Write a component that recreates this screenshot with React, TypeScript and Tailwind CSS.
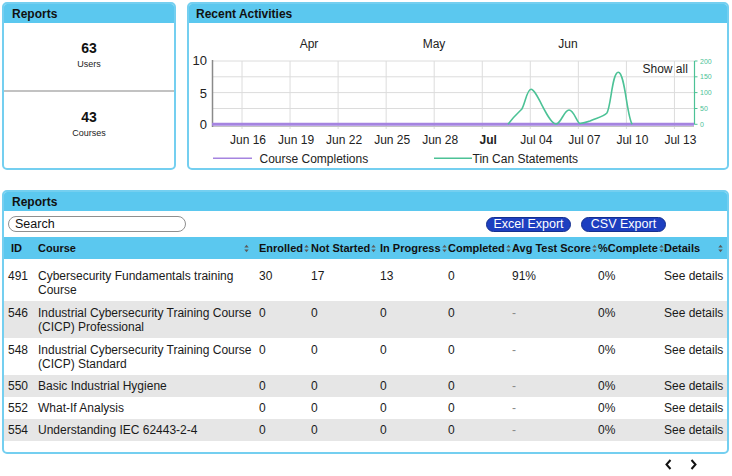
import { Fragment } from 'react'

const rows = [
  { id: 491, course: 'Cybersecurity Fundamentals training Course', enrolled: 30, notStarted: 17, inProgress: 13, completed: 0, avg: '91%', pct: '0%', pad: 'pt-[10px] pb-[4px]' },
  { id: 546, course: 'Industrial Cybersecurity Training Course (CICP) Professional', enrolled: 0, notStarted: 0, inProgress: 0, completed: 0, avg: '-', pct: '0%', pad: 'pt-[5px] pb-[4px]' },
  { id: 548, course: 'Industrial Cybersecurity Training Course (CICP) Standard', enrolled: 0, notStarted: 0, inProgress: 0, completed: 0, avg: '-', pct: '0%', pad: 'pt-[5px] pb-[4px]' },
  { id: 550, course: 'Basic Industrial Hygiene', enrolled: 0, notStarted: 0, inProgress: 0, completed: 0, avg: '-', pct: '0%', pad: 'pt-[4px] pb-[4px]' },
  { id: 552, course: 'What-If Analysis', enrolled: 0, notStarted: 0, inProgress: 0, completed: 0, avg: '-', pct: '0%', pad: 'pt-[4px] pb-[4px]' },
  { id: 554, course: 'Understanding IEC 62443-2-4', enrolled: 0, notStarted: 0, inProgress: 0, completed: 0, avg: '-', pct: '0%', pad: 'pt-[4px] pb-[4px]' },
]

const gridX = Array.from({ length: 10 }, (_, i) => 242 + 48.05 * i)
const gridY = [61, 76.8, 92.6, 108.5, 124.3]
const xLabels = ['Jun 16', 'Jun 19', 'Jun 22', 'Jun 25', 'Jun 28', 'Jul', 'Jul 04', 'Jul 07', 'Jul 10', 'Jul 13']

function SortIcon() {
  return (
    <svg width="5" height="9" viewBox="0 0 5 9" className="shrink-0">
      <path d="M0.3 3.6 L2.5 0.7 L4.7 3.6 Z" fill="#5a5a5a" />
      <path d="M0.3 5.4 L2.5 8.3 L4.7 5.4 Z" fill="#5a5a5a" />
    </svg>
  )
}

function CardHeader({ title, pad = 'pl-[8px]' }: { title: string; pad?: string }) {
  return (
    <div className={`h-[19px] bg-[#5bc8ef] ${pad} flex items-center text-[12px] font-bold text-[#111]`}>
      {title}
    </div>
  )
}

function ActivityChart() {
  const font = 'Liberation Sans, Arial, sans-serif'
  return (
    <svg width="538" height="145" viewBox="189 23 538 145" className="block">
      {/* month labels */}
      <text x="309" y="48" fontSize="12" textAnchor="middle" fontFamily={font} fill="#222">Apr</text>
      <text x="434" y="48" fontSize="12" textAnchor="middle" fontFamily={font} fill="#222">May</text>
      <text x="568" y="48" fontSize="12" textAnchor="middle" fontFamily={font} fill="#222">Jun</text>

      {/* grid */}
      {gridY.map((y) => (
        <line key={y} x1="212" x2="694" y1={y} y2={y} stroke="#dcdcdc" strokeWidth="1" />
      ))}
      {gridX.map((x) => (
        <line key={x} x1={x} x2={x} y1="61" y2="129" stroke="#dcdcdc" strokeWidth="1" />
      ))}
      <line x1="212" x2="694" y1="126.5" y2="126.5" stroke="#c4c4c4" strokeWidth="1" />
      <line x1="212.5" x2="212.5" y1="60" y2="127" stroke="#8a8a8a" strokeWidth="1.5" />

      {/* left axis */}
      {[['10', 65.3], ['5', 97.6], ['0', 128.6]].map(([t, y]) => (
        <text key={t} x="207" y={y} fontSize="13" textAnchor="end" fontFamily={font} fill="#222">{t}</text>
      ))}

      {/* right axis */}
      <line x1="694.5" x2="694.5" y1="61" y2="124.5" stroke="#4cc296" strokeWidth="1.2" />
      {[['200', 61], ['150', 76.8], ['100', 92.6], ['50', 108.5], ['0', 124.3]].map(([t, y]) => (
        <Fragment key={t}>
          <line x1="694.5" x2="697.5" y1={y} y2={y} stroke="#4cc296" strokeWidth="1" />
          <text x="700" y={Number(y) + 2.5} fontSize="7" fontFamily={font} fill="#4cc296">{t}</text>
        </Fragment>
      ))}

      {/* series */}
      <line x1="212" x2="694" y1="124.3" y2="124.3" stroke="#a584e0" strokeWidth="3" />
      <path
        d="M 508 124.3 C 514 116, 518 113, 521.7 109.3 C 525 104, 527 89.3, 531 89.3 C 537 89.3, 548 124, 556 124 C 561 124, 564 110, 569 110 C 574 110, 577 123, 580 123.5 C 584 123, 587 122, 590 121 C 596 118, 603 117, 606.7 113.3 C 611 108, 612 72.3, 618.3 72.3 C 625 72.3, 627 118, 632.3 124.3"
        fill="none"
        stroke="#4cc296"
        strokeWidth="1.6"
      />

      <text x="642.5" y="72.6" fontSize="12" fontFamily={font} fill="#222">Show all</text>

      {/* x labels */}
      {xLabels.map((l, i) => (
        <text
          key={l}
          x={gridX[i] + 6}
          y="144.3"
          fontSize="12"
          textAnchor="middle"
          fontFamily={font}
          fontWeight={l === 'Jul' ? 700 : 400}
          fill="#222"
        >
          {l}
        </text>
      ))}

      {/* legend */}
      <line x1="213" x2="252" y1="158.3" y2="158.3" stroke="#a584e0" strokeWidth="1.5" />
      <text x="259.5" y="162.6" fontSize="12" fontFamily={font} fill="#222">Course Completions</text>
      <line x1="434" x2="472" y1="158.3" y2="158.3" stroke="#4cc296" strokeWidth="1.5" />
      <text x="472.5" y="162.6" fontSize="12" fontFamily={font} fill="#222">Tin Can Statements</text>
    </svg>
  )
}

export default function App() {
  const th = 'p-0 text-left font-bold align-middle'
  const headSort = (label: string) => (
    <div className="flex items-center gap-[1px] whitespace-nowrap pl-[3px]">
      <span>{label}</span>
      <SortIcon />
    </div>
  )

  return (
    <div className="w-[732px] h-[476px] bg-white pt-[2px] pl-[2px] font-['Liberation_Sans',Arial,sans-serif] text-[#1a1a1a]">

      {/* ── Top row ───────────────────────────────────────────────────── */}
      <div className="flex gap-[11px]">
        <div className="w-[174px] h-[168px] rounded-[5px] border-2 border-[#74cff0] overflow-hidden flex flex-col">
          <CardHeader title="Reports" />
          <div className="h-[67px] pt-[17px] flex flex-col items-center">
            <div className="text-[14px] leading-[16px] font-bold text-[#111]">63</div>
            <div className="mt-[3px] text-[9px] leading-[11px] text-[#222]">Users</div>
          </div>
          <div className="h-[2px] bg-[#c2c2c2]" />
          <div className="pt-[17px] flex flex-col items-center">
            <div className="text-[14px] leading-[16px] font-bold text-[#111]">43</div>
            <div className="mt-[3px] text-[9px] leading-[11px] text-[#222]">Courses</div>
          </div>
        </div>

        <div className="w-[542px] h-[168px] rounded-[5px] border-2 border-[#74cff0] overflow-hidden flex flex-col">
          <CardHeader title="Recent Activities" pad="pl-[7px]" />
          <ActivityChart />
        </div>
      </div>

      {/* ── Reports table ─────────────────────────────────────────────── */}
      <div className="mt-[20px] w-[727px] rounded-[5px] border-2 border-[#74cff0] overflow-hidden pb-[11px]">
        <CardHeader title="Reports" />

        <div className="h-[26px] flex items-center pl-[4px]">
          <input
            placeholder="Search"
            className="w-[178px] h-[16px] rounded-full border border-[#8f8f8f] pl-[6px] text-[12.5px] leading-[14px] outline-none placeholder:text-[#111]"
          />
          <div className="ml-[300px] flex gap-[10px]">
            <button className="w-[85px] h-[15px] rounded-full bg-[#1d3fc0] border border-[#14308f] text-white text-[12.5px] leading-[13px]">
              Excel Export
            </button>
            <button className="w-[85px] h-[15px] rounded-full bg-[#1d3fc0] border border-[#14308f] text-white text-[12.5px] leading-[13px]">
              CSV Export
            </button>
          </div>
        </div>

        <table className="w-full table-fixed border-collapse text-[12px] leading-[14px]">
          <colgroup>
            <col className="w-[31px]" />
            <col className="w-[221px]" />
            <col className="w-[52px]" />
            <col className="w-[69px]" />
            <col className="w-[68px]" />
            <col className="w-[64px]" />
            <col className="w-[86px]" />
            <col className="w-[66px]" />
            <col className="w-[66px]" />
          </colgroup>
          <thead>
            <tr className="h-[22px] bg-[#5bc8ef] text-[11px] text-[#111]">
              <th className={`${th} pl-[7px]`}>ID</th>
              <th className={th}>
                <div className="flex items-center justify-between pl-[3px] pr-[7px]">
                  <span>Course</span>
                  <SortIcon />
                </div>
              </th>
              <th className={th}>{headSort('Enrolled')}</th>
              <th className={th}>{headSort('Not Started')}</th>
              <th className={th}>{headSort('In Progress')}</th>
              <th className={th}>{headSort('Completed')}</th>
              <th className={th}>{headSort('Avg Test Score')}</th>
              <th className={th}>{headSort('%Complete')}</th>
              <th className={th}>
                <div className="flex items-center justify-between pl-[3px] pr-[4px]">
                  <span>Details</span>
                  <SortIcon />
                </div>
              </th>
            </tr>
          </thead>
          <tbody>
            {rows.map((r, i) => {
              const td = `p-0 align-top ${r.pad}`
              return (
                <tr key={r.id} className={i % 2 === 1 ? 'bg-[#e6e6e6]' : 'bg-white'}>
                  <td className={`${td} pl-[4px]`}>{r.id}</td>
                  <td className={`${td} pl-[3px]`}>{r.course}</td>
                  <td className={`${td} pl-[3px]`}>{r.enrolled}</td>
                  <td className={`${td} pl-[3px]`}>{r.notStarted}</td>
                  <td className={`${td} pl-[3px]`}>{r.inProgress}</td>
                  <td className={`${td} pl-[3px]`}>{r.completed}</td>
                  <td className={`${td} pl-[3px] ${r.avg === '-' ? 'text-[#8a8a8a]' : ''}`}>{r.avg}</td>
                  <td className={`${td} pl-[3px]`}>{r.pct}</td>
                  <td className={`${td} pl-[3px] whitespace-nowrap`}>See details</td>
                </tr>
              )
            })}
          </tbody>
        </table>
      </div>

      {/* ── Pager ─────────────────────────────────────────────────────── */}
      <div className="h-[20px] flex items-center justify-end gap-[18px] pr-[35px]">
        <svg width="7" height="11" viewBox="0 0 7 11">
          <path d="M5.5 1 L1.5 5.5 L5.5 10" fill="none" stroke="#111" strokeWidth="2" />
        </svg>
        <svg width="7" height="11" viewBox="0 0 7 11">
          <path d="M1.5 1 L5.5 5.5 L1.5 10" fill="none" stroke="#111" strokeWidth="2" />
        </svg>
      </div>
    </div>
  )
}
